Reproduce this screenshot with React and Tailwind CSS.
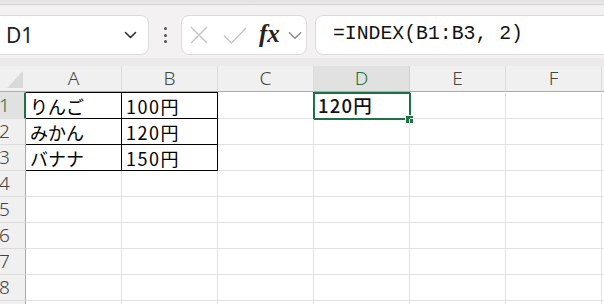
import React from "react";

const cols = ["A", "B", "C", "D", "E", "F", ""];
const data = {
  1: { A: "りんご", B: "100円" },
  2: { A: "みかん", B: "120円" },
  3: { A: "バナナ", B: "150円" },
};
const jp = { fontFamily: '"Noto Sans CJK JP", "Noto Sans", sans-serif' };
const hdr = { fontFamily: '"Noto Sans", "Liberation Sans", sans-serif' };

function Chevron({ className, stroke = "#333", sw = 1.6 }) {
  return (
    <svg className={className} viewBox="0 0 12 8" fill="none">
      <path d="M1 1.5 L6 6.5 L11 1.5" stroke={stroke} strokeWidth={sw} strokeLinecap="round" strokeLinejoin="round" />
    </svg>
  );
}

function Toolbar() {
  return (
    <div className="h-[61px] bg-[#f3f1f1] flex flex-col">
      <div className="flex items-start pt-[10px] h-[53px]">
        <div className="ml-[-10px] w-[159px] h-[40px] bg-white border border-[#dcdada] rounded-[8px] flex items-center pl-[15px] pr-[6px] shrink-0">
          <span className="text-[21px] text-[#222] leading-none" style={hdr}>D1</span>
          <Chevron className="ml-auto mr-[5px] w-[13px] h-[8px]" />
        </div>
        <div className="w-[32px] h-[40px] flex flex-col items-center justify-center gap-[3.5px] shrink-0">
          <div className="w-[3px] h-[3px] rounded-full bg-[#555]" />
          <div className="w-[3px] h-[3px] rounded-full bg-[#555]" />
          <div className="w-[3px] h-[3px] rounded-full bg-[#555]" />
        </div>
        <div className="w-[126px] h-[40px] bg-white border border-[#dcdada] rounded-[8px] flex items-center shrink-0">
          <svg className="ml-[8px] w-[18px] h-[18px]" viewBox="0 0 18 18" fill="none">
            <path d="M1 1 L17 17 M17 1 L1 17" stroke="#c4c4c4" strokeWidth="1.4" />
          </svg>
          <svg className="ml-[15px] w-[24px] h-[17px]" viewBox="0 0 24 17" fill="none">
            <path d="M1 8.5 L8.5 16 L23 1" stroke="#c4c4c4" strokeWidth="1.4" />
          </svg>
          <span
            className="ml-[12px] text-[25px] italic font-bold text-[#222] leading-none -mt-[3px] w-[24px]"
            style={{ fontFamily: '"Liberation Serif", "DejaVu Serif", serif' }}
          >
            fx
          </span>
          <Chevron className="ml-[5px] w-[14px] h-[9px]" stroke="#8a8a8a" sw={1.3} />
        </div>
        <div className="ml-[8px] w-[320px] h-[40px] bg-white border border-[#dcdada] rounded-[8px] flex items-center pl-[17px] shrink-0">
          <span
            className="text-[19.8px] text-[#111] leading-none"
            style={{ fontFamily: '"Liberation Mono", "DejaVu Sans Mono", monospace' }}
          >
            =INDEX(B1:B3, 2)
          </span>
        </div>
      </div>
      <div className="h-[8px] bg-[#ebe9e9]" />
    </div>
  );
}

function HeaderRow() {
  return (
    <div className="flex h-[26px] shrink-0">
      <div className="w-[26px] shrink-0 h-full bg-[#f0f0f0] border-b border-[#ababab] relative">
        <svg className="absolute left-[7px] top-[5px] w-[16px] h-[17px]" viewBox="0 0 16 17">
          <polygon points="16,0 16,17 0,17" fill="#d9d9d9" />
        </svg>
      </div>
      {cols.map((c, i) => {
        const sel = c === "D";
        return (
          <div
            key={i}
            className={
              "w-[96px] shrink-0 h-full border-r border-b flex items-center justify-center text-[19px] " +
              (sel
                ? "bg-[#e1e1e1] text-[#1e7145] border-r-[#d0d0d0] border-b-[#ababab]"
                : "bg-[#f0f0f0] text-[#444] border-r-[#dcdcdc] border-b-[#ababab]")
            }
            style={{ ...hdr, fontWeight: 300 }}
          >
            {c}
          </div>
        );
      })}
    </div>
  );
}

function Row({ n }) {
  const first = n === 1;
  return (
    <div className={"flex shrink-0 " + (first ? "h-[27px]" : "h-[26px]")}>
      <div
        className={
          "w-[26px] shrink-0 h-full border-b border-b-[#dcdcdc] flex items-center text-[19px] " +
          (first
            ? "bg-[#e1e1e1] text-[#1e7145] border-r-2 border-r-[#1e7145] border-t border-t-[#e1e1e1]"
            : "bg-[#f0f0f0] text-[#444] border-r border-r-[#ababab]")
        }
        style={{ ...hdr, fontWeight: 300 }}
      >
        {n <= 8 && <span className="-ml-[1px]">{n}</span>}
      </div>
      {cols.map((c, i) => {
        const inData = n <= 3 && (c === "A" || c === "B");
        const txt = data[n] && data[n][c];
        const sel = first && c === "D";
        return (
          <div
            key={i}
            className={
              "w-[96px] shrink-0 h-full border-r border-b relative flex items-center pl-[4px] text-[18px] text-black " +
              (inData ? "border-black " : "border-[#e1e1e1] ") +
              (first ? (inData ? "border-t border-t-black" : "border-t border-t-white") : "")
            }
            style={jp}
          >
            {txt && (
              <span className={"leading-none " + (c === "B" ? "tracking-[1.5px]" : "")}>{txt}</span>
            )}
            {sel && (
              <>
                <span className="leading-none tracking-[1.2px] text-[18.5px] text-[#111] font-medium">120円</span>
                <div className="absolute -left-[1px] -top-[1px] w-[98px] h-[28px] border-2 border-[#1e7145] pointer-events-none" />
                <div className="absolute left-[91px] top-[22px] w-[9px] h-[9px] bg-[#1e7145] border border-white" />
              </>
            )}
          </div>
        );
      })}
    </div>
  );
}

export default function App() {
  return (
    <div className="w-[604px] h-[304px] overflow-hidden bg-white flex flex-col">
      <div className="h-[5px] shrink-0 bg-gradient-to-b from-[#e2e0e0] to-[#ebe9e9] border-b border-[#d2d0d0]" />
      <Toolbar />
      <HeaderRow />
      {[1, 2, 3, 4, 5, 6, 7, 8, 9].map((n) => (
        <Row key={n} n={n} />
      ))}
    </div>
  );
}
